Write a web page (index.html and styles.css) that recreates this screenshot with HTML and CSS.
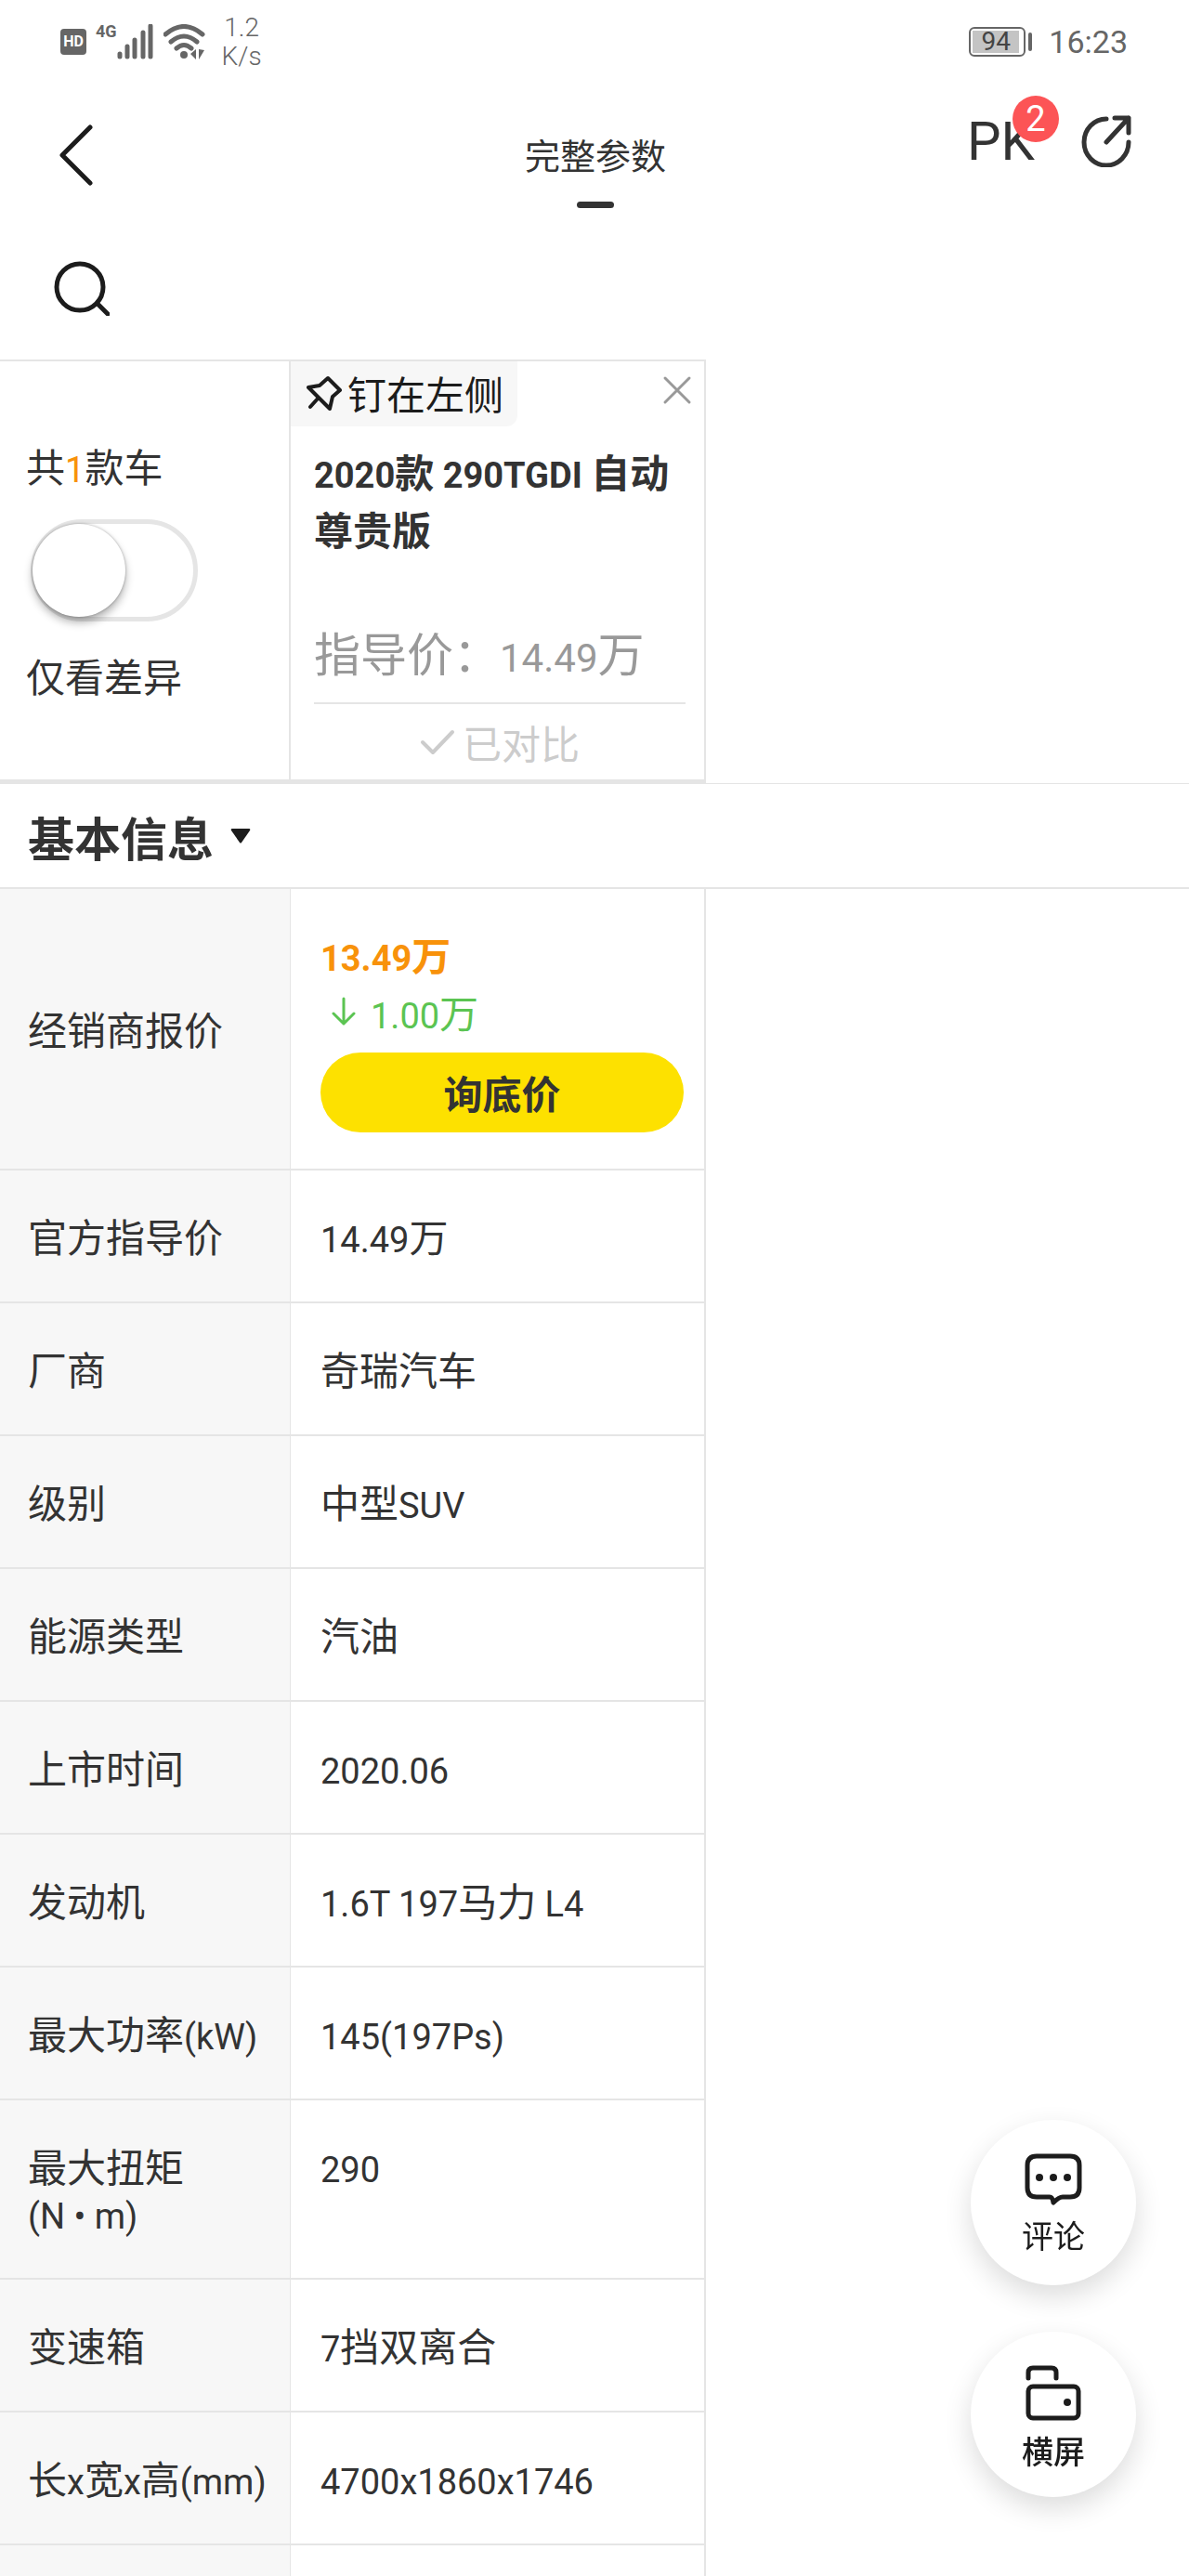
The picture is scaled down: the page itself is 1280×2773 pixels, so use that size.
FILE: index.html
```html
<!doctype html>
<html lang="zh-CN">
  <head>
    <meta charset="UTF-8" />
    <meta name="viewport" content="width=device-width, initial-scale=1.0" />
    <title>完整参数</title>
    <link rel="stylesheet" href="styles.css">
  </head>
  <body>
    <!-- Phone status bar -->
    <div class="status-bar">
      <div class="status-left">
        <span class="hd">HD</span>
        <span class="network">4G</span>
        <svg class="signal" width="40" height="38" viewBox="0 0 40 38">
          <path d="M3 32v3M11 24v11M19 17v18M28 9v26M36 2v33" />
        </svg>
        <svg class="wifi" width="45" height="38" viewBox="0 0 45 38">
          <path d="M2 11Q22-6 42 11M8 19Q22 7 36 19M14 26Q22 19 30 26" />
          <circle cx="22" cy="33" r="4" />
          <path class="arrows" d="M35 27v11l-6-6zM38 27v11l6-10z" />
        </svg>
        <span class="speed">1.2<br />K/s</span>
      </div>
      <div class="status-right">
        <span class="battery"><span class="battery-level">94</span></span>
        <span class="battery-cap"></span>
        <span class="clock">16:23</span>
      </div>
    </div>

    <!-- Nav -->
    <header class="nav-bar">
      <button class="icon-btn back" aria-label="返回">
        <svg width="36" height="66" viewBox="0 0 36 66">
          <path d="M33 3L3 33l30 30" />
        </svg>
      </button>
      <h1 class="nav-title">完整参数</h1>
      <div class="nav-actions">
        <button class="icon-btn pk">PK<span class="badge">2</span></button>
        <button class="icon-btn share" aria-label="分享">
          <svg width="54" height="56" viewBox="0 0 54 56">
            <path d="M27 4A24 25 0 1 0 51 29M36 3h15v16M51 3L27 29" />
          </svg>
        </button>
      </div>
    </header>

    <div class="search-row">
      <button class="icon-btn search" aria-label="搜索">
        <svg width="60" height="60" viewBox="0 0 60 60">
          <circle cx="28" cy="29" r="25" />
          <path d="M47 47l11 11" />
        </svg>
      </button>
    </div>

    <!-- Compared cars -->
    <section class="compare">
      <div class="filter">
        <p>共<span class="num count">1</span>款车</p>
        <input type="checkbox" class="switch" id="onlyDiff" />
        <label for="onlyDiff">仅看差异</label>
      </div>
      <div class="car">
        <div class="car-top">
          <button class="pin">
            <svg width="38" height="38" viewBox="0 0 38 38">
              <path d="M23 3L36 16L28 23L25 36L2 13L14 11ZM13 24L4 34" />
            </svg>
            钉在左侧
          </button>
          <button class="icon-btn close" aria-label="移除">
            <svg width="32" height="32" viewBox="0 0 32 32">
              <path d="M3 3l26 26M29 3L3 29" />
            </svg>
          </button>
        </div>
        <div class="car-body">
          <h2 class="car-name"><span class="num">2020</span>款<span class="num"> 290TGDI </span>自动尊贵版</h2>
          <p class="car-price">指导价：<span class="num">14.49</span>万</p>
          <button class="compared" disabled>
            <svg width="38" height="28" viewBox="0 0 38 28">
              <path d="M3 14l11 11L35 3" />
            </svg>
            已对比
          </button>
        </div>
      </div>
    </section>

    <button class="section-title">
      基本信息
      <svg width="22" height="16" viewBox="0 0 22 16">
        <path d="M2 0h18q2 0 1 2L12 15q-1 1-2 0L1 2Q0 0 2 0z" />
      </svg>
    </button>

    <main class="specs">
      <table>
        <tr class="dealer">
          <th scope="row">经销商报价</th>
          <td>
            <div class="dealer-price"><span class="num">13.49</span>万</div>
            <div class="dealer-drop">
              <svg width="26" height="32" viewBox="0 0 26 32">
                <path d="M13 2v27M2 18l11 11l11-11" />
              </svg>
              <p><span class="num">1.00</span>万</p>
            </div>
            <button class="ask">询底价</button>
          </td>
        </tr>
        <tr><th scope="row">官方指导价</th><td><span class="num">14.49</span>万</td></tr>
        <tr><th scope="row">厂商</th><td>奇瑞汽车</td></tr>
        <tr><th scope="row">级别</th><td>中型<span class="num">SUV</span></td></tr>
        <tr><th scope="row">能源类型</th><td>汽油</td></tr>
        <tr><th scope="row">上市时间</th><td><span class="num">2020.06</span></td></tr>
        <tr><th scope="row">发动机</th><td><span class="num">1.6T 197</span>马力<span class="num"> L4</span></td></tr>
        <tr><th scope="row">最大功率<span class="num">(kW)</span></th><td><span class="num">145(197Ps)</span></td></tr>
        <tr><th scope="row">最大扭矩<br /><span class="num">(N • m)</span></th><td><span class="num">290</span></td></tr>
        <tr><th scope="row">变速箱</th><td><span class="num">7</span>挡双离合</td></tr>
        <tr><th scope="row">长<span class="num">x</span>宽<span class="num">x</span>高<span class="num">(mm)</span></th><td><span class="num">4700x1860x1746</span></td></tr>
        <tr><th></th><td></td></tr>
      </table>
    </main>

    <!-- Floating buttons -->
    <div class="fabs">
      <button class="fab">
        <svg width="62" height="58" viewBox="0 0 62 58">
          <path d="M13 4h36q10 0 10 10v24q0 10-10 10h-8q-4 0-10 6q-1-6-4-6H13q-10 0-10-10V14Q3 4 13 4z" />
          <circle cx="16" cy="27" r="4" />
          <circle cx="31" cy="27" r="4" />
          <circle cx="46" cy="27" r="4" />
        </svg>
        评论
      </button>
      <button class="fab landscape">
        <svg width="62" height="62" viewBox="0 0 62 62">
          <path d="M4 15V9q0-5 5-5h20q5 0 5 5v6" />
          <rect x="4" y="24" width="54" height="34" rx="5" />
          <circle cx="46" cy="41" r="4" />
        </svg>
        横屏
      </button>
    </div>
  </body>
</html>
```
FILE: styles.css
```css
:root {
  --text: #333;
  --muted: #999;
  --line: #e5e5e5;
  --label-bg: #f7f7f7;
  --label-col: 313px;
  --car-col: 447px;
}

* {
  box-sizing: border-box;
  margin: 0;
  padding: 0;
}

html,
body {
  height: 100%;
}

body {
  display: flex;
  flex-direction: column;
  overflow: hidden;
  background: #fff;
  color: var(--text);
  font-family: 'Noto Sans CJK SC', sans-serif;
  font-size: 42px;
  line-height: 50px;
}

button {
  border: none;
  background: none;
  color: inherit;
  font: inherit;
  cursor: pointer;
}

svg {
  display: block;
  flex: none;
  fill: none;
  stroke: currentColor;
  stroke-width: 5px;
  stroke-linecap: round;
  stroke-linejoin: round;
}

/* Latin letters and digits sit a bit smaller than the Chinese text */
.num {
  font-family: Roboto, sans-serif;
  font-size: 38px;
  line-height: 1;
}

/* Status bar */
.status-bar {
  flex: none;
  display: flex;
  justify-content: space-between;
  height: 90px;
  padding: 0 66px 0 65px;
  color: #666;
  font-family: Roboto, sans-serif;
}

.status-left,
.status-right {
  display: flex;
  align-items: center;
}

.hd {
  width: 28px;
  height: 28px;
  border-radius: 4px;
  background: #666;
  color: #fff;
  font-size: 16px;
  font-weight: 700;
  line-height: 28px;
  text-align: center;
}

.network {
  margin: 0 0 22px 10px;
  font-size: 18px;
  font-weight: 700;
  line-height: 22px;
}

.wifi {
  margin-left: 10px;
}

.wifi circle,
.wifi .arrows {
  fill: currentColor;
  stroke: none;
}

.speed {
  margin-left: 18px;
  font-size: 28px;
  font-weight: 300;
  line-height: 31px;
  text-align: center;
}

.battery {
  display: flex;
  width: 61px;
  height: 32px;
  padding: 2px 5px 2px 2px;
  border: 2px solid #666;
  border-radius: 6px;
}

.battery-level {
  flex: 1;
  background: #c4c4c4;
  color: #444;
  font-size: 28px;
  line-height: 24px;
  text-align: center;
}

.battery-cap {
  width: 4px;
  height: 20px;
  margin-left: 3px;
  border-radius: 2px;
  background: #666;
}

.clock {
  margin-left: 18px;
  font-size: 34px;
}

/* Nav */
.nav-bar {
  flex: none;
  display: grid;
  grid-template-columns: 1fr auto 1fr;
  height: 134px;
  padding: 0 62px 0 64px;
}

.back {
  justify-self: start;
  padding-top: 20px;
  color: #1c1c1c;
}

.nav-title {
  display: flex;
  flex-direction: column;
  align-items: center;
  justify-content: flex-end;
  gap: 26px;
  font-size: 38px;
  font-weight: 400;
}

.nav-title::after {
  content: '';
  width: 40px;
  height: 7px;
  border-radius: 4px;
  background: var(--text);
}

.nav-actions {
  display: flex;
  align-items: center;
  justify-content: flex-end;
  gap: 50px;
  height: 124px;
}

.pk {
  position: relative;
  font-family: Roboto, sans-serif;
  font-size: 58px;
}

.badge {
  position: absolute;
  top: -24px;
  right: -26px;
  width: 50px;
  height: 50px;
  border-radius: 50%;
  background: #fc5456;
  color: #fff;
  font-size: 38px;
  text-align: center;
}

.search-row {
  flex: none;
  display: flex;
  padding: 56px 58px 47px;
  color: #1c1c1c;
}

/* Compared cars */
.compare {
  flex: none;
  display: flex;
  height: 457px;
  border-bottom: 1px solid var(--line);
}

.filter,
.car {
  border: solid var(--line);
  border-width: 2px 2px 4px 0;
}

.filter {
  display: flex;
  flex-direction: column;
  justify-content: center;
  gap: 33px;
  width: var(--label-col);
  padding-left: 28px;
}

.count {
  color: #f8920a;
}

.switch {
  appearance: none;
  width: 180px;
  height: 110px;
  margin-left: 5px;
  border: 5px solid var(--line);
  border-radius: 55px;
  cursor: pointer;
}

.switch::before {
  content: '';
  display: block;
  width: 100px;
  height: 100px;
  margin-left: -3px;
  border-radius: 50%;
  background: #fff;
  box-shadow: 0 6px 10px rgba(0, 0, 0, 0.3), 0 0 3px rgba(0, 0, 0, 0.3);
}

.switch:checked::before {
  margin-left: 73px;
}

.car {
  width: var(--car-col);
}

.car-top {
  display: flex;
  justify-content: space-between;
}

.pin {
  display: flex;
  align-items: center;
  gap: 6px;
  height: 70px;
  padding: 0 15px 2px 17px;
  border-radius: 0 0 12px 0;
  background: var(--label-bg);
  color: #1c1c1c;
}

.pin svg {
  stroke-width: 4px;
}

.close {
  padding: 0 13px 8px;
  color: var(--muted);
}

.close svg {
  stroke-width: 3px;
}

.car-body {
  padding: 17px 20px 0 25px;
}

.car-name {
  min-height: 124px;
  font-size: 42px;
  font-weight: 700;
  line-height: 62px;
}

.car-price {
  padding: 70px 0 24px;
  border-bottom: 2px solid var(--line);
  color: var(--muted);
  font-size: 50px;
  line-height: 62px;
}

.car-price .num {
  font-size: 42px;
}

.compared {
  display: flex;
  align-items: center;
  justify-content: center;
  gap: 8px;
  width: 100%;
  height: 82px;
  color: #ccc;
}

.compared svg {
  stroke-width: 4px;
}

/* Section heading */
.section-title {
  flex: none;
  display: flex;
  align-items: center;
  gap: 18px;
  height: 113px;
  padding-left: 30px;
  border-bottom: 2px solid var(--line);
  font-size: 50px;
  font-weight: 700;
}

.section-title svg {
  fill: #1c1c1c;
  stroke: none;
}

/* Specs table */
.specs {
  flex: 1;
  min-height: 0;
  overflow: hidden;
}

table {
  width: calc(var(--label-col) + var(--car-col));
  table-layout: fixed;
  border-collapse: separate;
  border-spacing: 0;
}

th,
td {
  height: 143px;
  padding: 45px 0 46px 30px;
  border-bottom: 2px solid var(--line);
  font-weight: 400;
  text-align: left;
  vertical-align: top;
}

th {
  width: var(--label-col);
  border-right: 1px solid var(--line);
  background: var(--label-bg);
}

td {
  padding-left: 32px;
  padding-right: 22px;
  border-right: 2px solid var(--line);
}

.dealer th {
  vertical-align: middle;
}

.dealer td {
  padding-top: 40px;
  padding-bottom: 39px;
}

.dealer-price {
  color: #f8920a;
  font-weight: 700;
  line-height: 60px;
}

.dealer-drop {
  display: flex;
  align-items: center;
  gap: 16px;
  padding-left: 12px;
  color: #5bc452;
  line-height: 64px;
}

.dealer-drop svg {
  stroke-width: 3px;
}

.ask {
  display: block;
  width: 100%;
  height: 86px;
  margin-top: 12px;
  border-radius: 43px;
  background: #fde100;
  font-weight: 700;
}

/* Floating buttons */
.fabs {
  position: fixed;
  right: 57px;
  bottom: 85px;
  display: flex;
  flex-direction: column;
  gap: 50px;
}

.fab {
  display: flex;
  flex-direction: column;
  align-items: center;
  gap: 6px;
  width: 178px;
  height: 178px;
  padding-top: 35px;
  border-radius: 50%;
  background: #fff;
  box-shadow: 0 12px 30px rgba(0, 0, 0, 0.14);
  color: #1c1c1c;
  font-size: 34px;
}

.fab svg circle {
  fill: currentColor;
  stroke: none;
}

.landscape {
  font-weight: 500;
}
```
